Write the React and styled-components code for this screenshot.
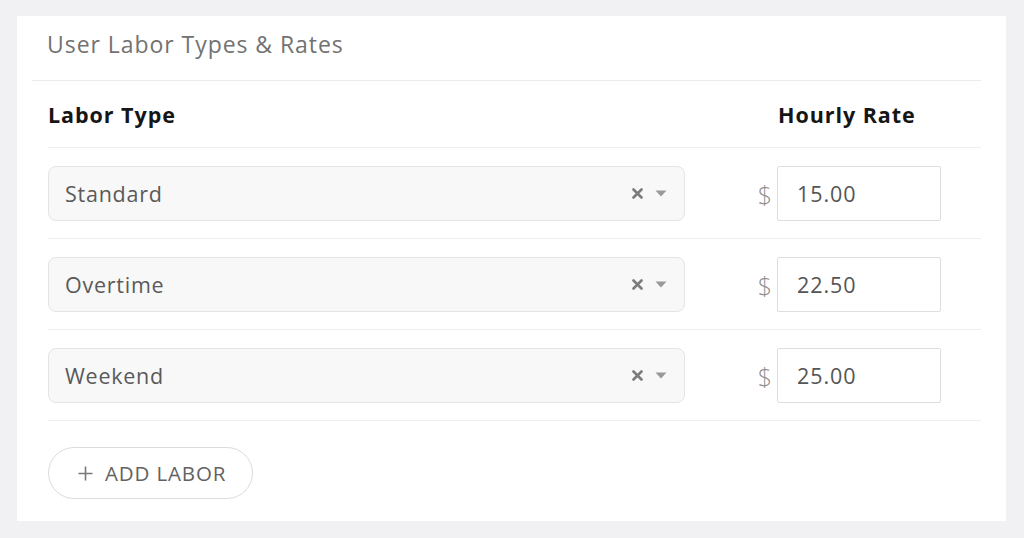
import React from "react";
import styled, { createGlobalStyle } from "styled-components";

const Global = createGlobalStyle`
  html, body { margin: 0; padding: 0; background: #f1f1f3; }
  body { font-family: "Open Sans", "Noto Sans", Arial, sans-serif; }
  * { box-sizing: border-box; }
`;

const Page = styled.div`
  padding: 16px 18px 17px 17px;
`;

const Card = styled.section`
  background: #fff;
  width: 989px;
  height: 505px;
  padding: 0 25px 0 15px;
  display: flex;
  flex-direction: column;
`;

const Title = styled.h2`
  margin: 0;
  height: 65px;
  display: flex;
  align-items: center;
  padding: 0 0 8px 15px;
  font-size: 23px;
  font-weight: 400;
  color: #727272;
  border-bottom: 1.5px solid #e9ecef;
  letter-spacing: 0.95px;
`;

const Table = styled.div`
  margin-left: 16px;
  display: flex;
  flex-direction: column;
`;

const Grid = styled.div`
  display: grid;
  grid-template-columns: 637px 1fr 164px;
  padding-right: 40px;
  align-items: center;
  border-bottom: 1.5px solid #eceef0;
`;

const HeaderRow = styled(Grid)`
  height: 67px;
`;

const HeadCell = styled.div`
  font-size: 21.5px;
  font-weight: 700;
  color: #161616;
  letter-spacing: 0.95px;
  grid-column: ${(p) => p.$col};
  padding-left: ${(p) => (p.$col === 3 ? "1px" : "0")};
`;

const Row = styled(Grid)`
  padding-top: 18px;
  padding-bottom: 17px;
`;

const Select = styled.div`
  height: 55px;
  border: 1px solid #e4e4e4;
  border-radius: 8px;
  background: #f8f8f8;
  display: flex;
  align-items: center;
  padding: 0 17px 0 16px;
  font-size: 21.5px;
  letter-spacing: 0.75px;
  color: #5a5a5a;
`;

const SelectValue = styled.span`
  flex: 1;
`;

const Indicators = styled.div`
  display: flex;
  align-items: center;
  gap: 12px;
  color: #8a8a8a;
`;

const Dollar = styled.span`
  justify-self: end;
  padding-right: 5px;
  font-size: 25px;
  font-weight: 300;
  color: #8f8f8f;
`;

const RateInput = styled.div`
  height: 55px;
  border: 1px solid #dedede;
  border-radius: 2px;
  display: flex;
  align-items: center;
  padding-left: 19px;
  font-size: 21.5px;
  letter-spacing: 0.9px;
  color: #555;
`;

const Footer = styled.div`
  margin-left: 16px;
  padding-top: 26px;
`;

const AddButton = styled.button`
  width: 205px;
  height: 52px;
  border: 1px solid #dcdcdc;
  border-radius: 26px;
  background: #fff;
  display: flex;
  align-items: center;
  gap: 12px;
  padding: 0 0 0 29px;
  font-family: inherit;
  font-size: 20.5px;
  color: #626262;
  letter-spacing: 0.85px;
`;

const ClearIcon = () => (
  <svg width="11" height="11" viewBox="0 0 11 11">
    <path d="M1.5 1.5 L9.5 9.5 M9.5 1.5 L1.5 9.5" stroke="#7c7c7c" strokeWidth="2.6" strokeLinecap="round" />
  </svg>
);

const ArrowIcon = () => (
  <svg width="12" height="7" viewBox="0 0 12 7">
    <path d="M0.5 0.5 H11.5 L6 6.5 Z" fill="#999" />
  </svg>
);

const PlusIcon = () => (
  <svg width="15" height="15" viewBox="0 0 15 15">
    <path d="M7.5 0.5 V14.5 M0.5 7.5 H14.5" stroke="#777" strokeWidth="1.6" />
  </svg>
);

const rows = [
  { type: "Standard", rate: "15.00" },
  { type: "Overtime", rate: "22.50" },
  { type: "Weekend", rate: "25.00" },
];

export default function App() {
  return (
    <>
      <Global />
      <Page>
        <Card>
          <Title>User Labor Types &amp; Rates</Title>
          <Table>
            <HeaderRow>
              <HeadCell $col={1}>Labor Type</HeadCell>
              <HeadCell $col={3}>Hourly Rate</HeadCell>
            </HeaderRow>
            {rows.map((r) => (
              <Row key={r.type}>
                <Select>
                  <SelectValue>{r.type}</SelectValue>
                  <Indicators>
                    <ClearIcon />
                    <ArrowIcon />
                  </Indicators>
                </Select>
                <Dollar>$</Dollar>
                <RateInput>{r.rate}</RateInput>
              </Row>
            ))}
          </Table>
          <Footer>
            <AddButton>
              <PlusIcon />
              ADD LABOR
            </AddButton>
          </Footer>
        </Card>
      </Page>
    </>
  );
}
